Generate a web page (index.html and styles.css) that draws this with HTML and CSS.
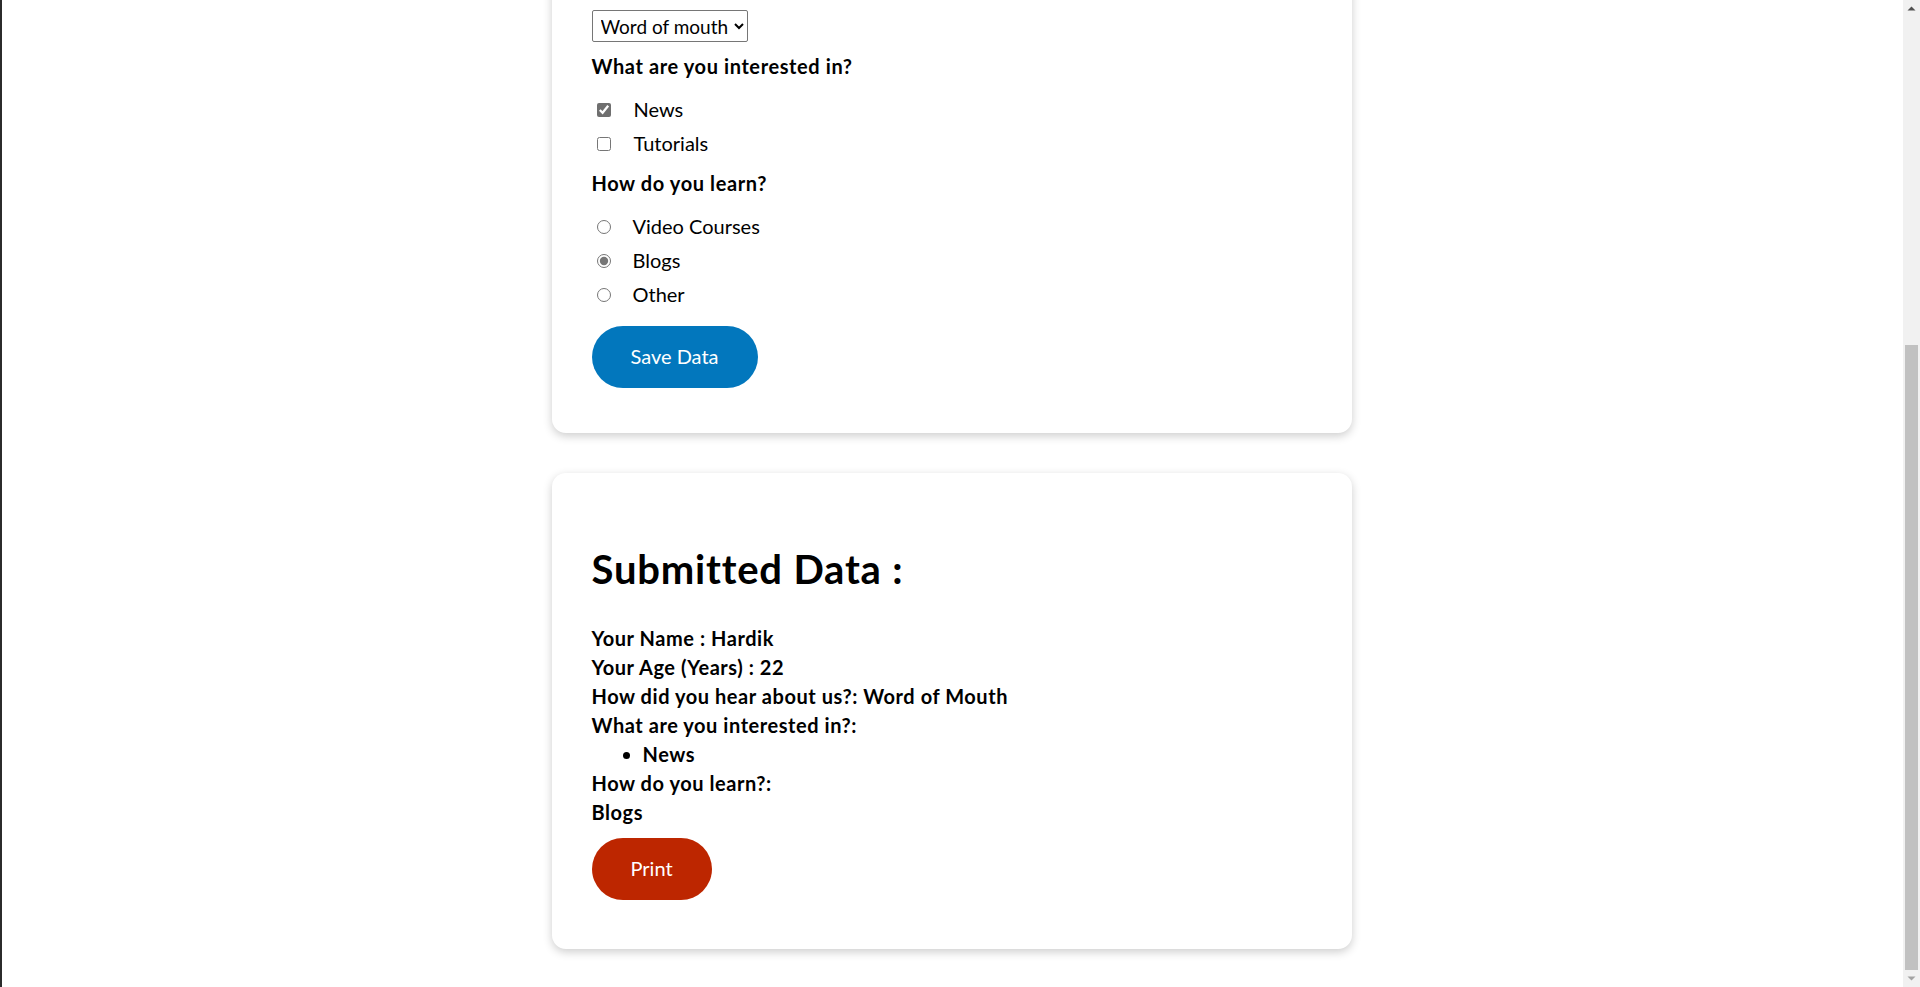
FILE: index.html
```html
<!DOCTYPE html>
<html lang="en">
<head>
<meta charset="utf-8">
<title>Form</title>
<link rel="stylesheet" href="styles.css">
</head>
<body>
<main class="page">
  <section class="card">
    <h1 class="card-title">Survey Form :</h1>
    <form class="form">
      <div class="group">
        <label class="group-title" for="name">Your Name</label>
        <input class="text-input" id="name" type="text" value="Hardik">
      </div>
      <div class="group">
        <label class="group-title" for="age">Your Age (Years)</label>
        <input class="text-input" id="age" type="number" value="22">
      </div>
      <div class="group">
        <label class="group-title" for="hear">How did you hear about us?</label>
        <select class="select" id="hear">
          <option>Word of mouth</option>
          <option>Social media</option>
          <option>Search engine</option>
        </select>
      </div>
      <div class="group">
        <div class="group-title">What are you interested in?</div>
        <div class="options">
          <div class="option"><input class="check" type="checkbox" id="news" checked><label for="news">News</label></div>
          <div class="option"><input class="check" type="checkbox" id="tutorials"><label for="tutorials">Tutorials</label></div>
        </div>
      </div>
      <div class="group">
        <div class="group-title">How do you learn?</div>
        <div class="options">
          <div class="option"><input class="radio" type="radio" name="learn" id="video"><label for="video">Video Courses</label></div>
          <div class="option"><input class="radio" type="radio" name="learn" id="blogs" checked><label for="blogs">Blogs</label></div>
          <div class="option"><input class="radio" type="radio" name="learn" id="other"><label for="other">Other</label></div>
        </div>
      </div>
      <button class="btn btn-save" type="button">Save Data</button>
    </form>
  </section>

  <section class="card">
    <h1 class="card-title card-title-data">Submitted Data :</h1>
    <div class="data">
      <p class="line">Your Name : Hardik</p>
      <p class="line">Your Age (Years) : 22</p>
      <p class="line">How did you hear about us?: Word of Mouth</p>
      <p class="line">What are you interested in?:</p>
      <ul class="list">
        <li>News</li>
      </ul>
      <p class="line">How do you learn?:</p>
      <p class="line">Blogs</p>
    </div>
    <button class="btn btn-print" type="button">Print</button>
  </section>
</main>

<div class="window-edge"></div>
<div class="scrollbar" aria-hidden="true">
  <div class="sb-btn sb-up"><svg width="17" height="17" viewBox="0 0 17 17"><path d="M4.5 10.5 L8.5 6.5 L12.5 10.5 Z" fill="#505050"/></svg></div>
  <div class="sb-track"><div class="sb-thumb"></div></div>
  <div class="sb-btn sb-down"><svg width="17" height="17" viewBox="0 0 17 17"><path d="M4.5 6.5 L8.5 10.5 L12.5 6.5 Z" fill="#a3a3a3"/></svg></div>
</div>
<script src="script.js"></script>
</body>
</html>
```

FILE: styles.css
```css
html, body {
  margin: 0;
  padding: 0;
  background: #ffffff;
}

body {
  font-family: Lato, "Noto Sans", sans-serif;
  font-size: 20px;
  line-height: 29px;
  color: #000;
  padding-right: 17px;
}

.page {
  width: 800px;
  margin: 0 auto;
  padding: 40px 0 38px;
  display: flex;
  flex-direction: column;
  gap: 40px;
}

.card {
  background: #fff;
  border-radius: 14px;
  box-shadow: 0 3px 10px rgba(0, 0, 0, 0.2);
  padding: 40px 40px 40px;
}

.card-title {
  font-size: 40px;
  line-height: 58px;
  font-weight: 700;
  letter-spacing: 0.8px;
  margin: 27px 0;
}

.card-title-data {
  margin-bottom: 26px;
}

.form {
  display: flex;
  flex-direction: column;
}

.group {
  display: flex;
  flex-direction: column;
  align-items: flex-start;
  margin-bottom: 10px;
}

.group-title {
  font-weight: 700;
  letter-spacing: 0.6px;
  margin-bottom: 14px;
}

.text-input,
.select {
  font-family: inherit;
  font-size: 19px;
  height: 32px;
  box-sizing: border-box;
  border: 1px solid #767676;
  border-radius: 2px;
  background: #fff;
  color: #000;
  padding: 0 2px 0 4px;
}

.text-input {
  width: 240px;
}

.options {
  display: flex;
  flex-direction: column;
  gap: 5px;
  margin-bottom: 1px;
}

.option {
  display: flex;
  align-items: center;
  height: 29px;
}

.check {
  margin: 0 23px 0 5px;
  width: 14px;
  height: 14px;
  accent-color: #6f6f6f;
}

.radio {
  margin: 0 22px 0 5px;
  width: 14px;
  height: 14px;
  accent-color: #767676;
}

.btn {
  align-self: flex-start;
  border: none;
  border-radius: 31px;
  color: #fff;
  font-family: inherit;
  font-size: 20px;
  line-height: 29px;
  padding: 16px 39px 17px;
  cursor: pointer;
}

.btn-save {
  background: #0277bd;
  margin-top: 6px;
  margin-bottom: 5px;
}

.btn-print {
  background: #bd2600;
  margin-top: 11px;
  margin-bottom: 9px;
}

.data {
  font-weight: 700;
  letter-spacing: 0.55px;
}

.line {
  margin: 0;
}

.list {
  margin: 0;
  padding-left: 51px;
}

.window-edge {
  position: fixed;
  left: 0;
  top: 0;
  bottom: 0;
  width: 2px;
  background: #2b2b2b;
}

.scrollbar {
  position: fixed;
  top: 0;
  right: 0;
  bottom: 0;
  width: 17px;
  background: #f1f1f1;
  display: flex;
  flex-direction: column;
}

.sb-btn {
  height: 17px;
  flex: none;
}

.sb-btn svg {
  display: block;
}

.sb-track {
  flex: 1;
  display: flex;
  flex-direction: column;
  justify-content: flex-end;
  padding: 0 2px;
}

.sb-thumb {
  height: 625px;
  background: #c1c1c1;
}
```

FILE: script.js
```js
function toBottom() {
  window.scrollTo(0, document.documentElement.scrollHeight);
}
toBottom();
window.addEventListener('load', toBottom);
```
